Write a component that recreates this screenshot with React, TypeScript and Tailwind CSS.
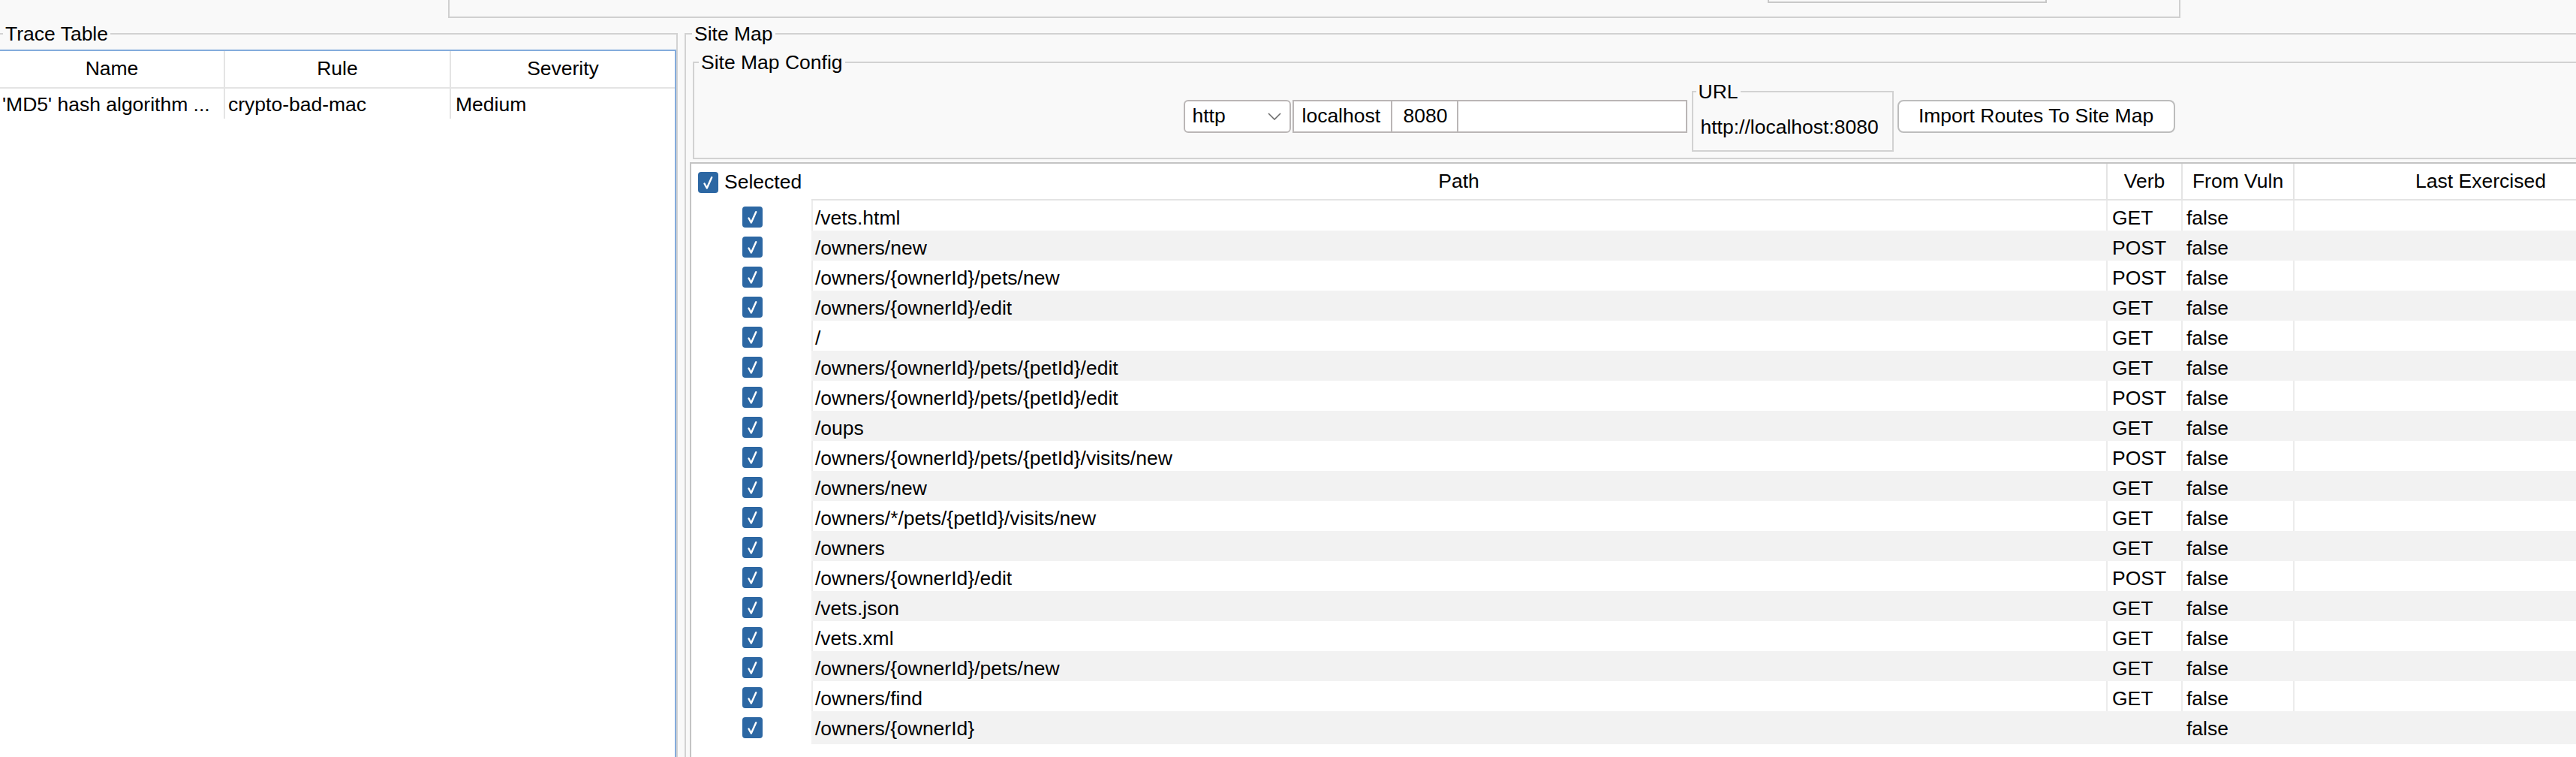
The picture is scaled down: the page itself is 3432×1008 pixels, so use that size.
import React from "react";

type Route = { path: string; verb: string; vuln: string };

const routes: Route[] = [
  { path: "/vets.html", verb: "GET", vuln: "false" },
  { path: "/owners/new", verb: "POST", vuln: "false" },
  { path: "/owners/{ownerId}/pets/new", verb: "POST", vuln: "false" },
  { path: "/owners/{ownerId}/edit", verb: "GET", vuln: "false" },
  { path: "/", verb: "GET", vuln: "false" },
  { path: "/owners/{ownerId}/pets/{petId}/edit", verb: "GET", vuln: "false" },
  { path: "/owners/{ownerId}/pets/{petId}/edit", verb: "POST", vuln: "false" },
  { path: "/oups", verb: "GET", vuln: "false" },
  { path: "/owners/{ownerId}/pets/{petId}/visits/new", verb: "POST", vuln: "false" },
  { path: "/owners/new", verb: "GET", vuln: "false" },
  { path: "/owners/*/pets/{petId}/visits/new", verb: "GET", vuln: "false" },
  { path: "/owners", verb: "GET", vuln: "false" },
  { path: "/owners/{ownerId}/edit", verb: "POST", vuln: "false" },
  { path: "/vets.json", verb: "GET", vuln: "false" },
  { path: "/vets.xml", verb: "GET", vuln: "false" },
  { path: "/owners/{ownerId}/pets/new", verb: "GET", vuln: "false" },
  { path: "/owners/find", verb: "GET", vuln: "false" },
  { path: "/owners/{ownerId}", verb: "", vuln: "false" },
];

function Check() {
  return (
    <svg viewBox="0 0 27 28" className="w-[27px] h-[28px] shrink-0">
      <rect x="0" y="0" width="27" height="28" rx="4" fill="#2c67a3" />
      <path
        d="M8.5 15.5 L11.8 21.5 L18.2 7.2"
        fill="none"
        stroke="#ffffff"
        strokeWidth="2.4"
        strokeLinecap="round"
        strokeLinejoin="round" />
    </svg>
  );
}

function TraceTable() {
  return (
    <fieldset className="w-[910px] -ml-[2px] mt-[6px] h-[1000px] border-2 border-[#d2d2d2]">
      <legend className="ml-[4px] px-[3px] leading-[30px]">Trace Table</legend>
      {}
      <div className="-ml-[2px] mt-[6px] w-[903px] h-[960px] bg-white border-2 border-[#84acdc]">
        <div className="flex h-[50px] border-b-2 border-[#e4e4e4]">
          <div className="w-[300px] flex items-center justify-center border-r-2 border-[#e4e4e4]">Name</div>
          <div className="w-[301px] flex items-center justify-center border-r-2 border-[#e4e4e4]">Rule</div>
          <div className="w-[298px] flex items-center justify-center">Severity</div>
        </div>
        <div className="flex h-[40px]">
          <div className="w-[300px] flex items-center pl-[3px] pt-[4px] border-r-2 border-[#e4e4e4] whitespace-nowrap overflow-hidden">'MD5' hash algorithm ...</div>
          <div className="w-[301px] flex items-center pl-[4px] pt-[4px] border-r-2 border-[#e4e4e4]">crypto-bad-mac</div>
          <div className="w-[298px] flex items-center pl-[6px] pt-[4px]">Medium</div>
        </div>
      </div>
    </fieldset>
  );
}

function ConfigBar() {
  return (
    <fieldset className="mx-[9px] mt-[8px] border-2 border-[#d2d2d2]">
      <legend className="ml-[6px] px-[3px] leading-[30px]">Site Map Config</legend>
      <div className="flex items-center justify-center pt-[9px] pb-[8px]">
        {}
        <div className="w-[143px] h-[44px] flex items-center justify-between pl-[10px] pr-[11px] bg-white border-2 border-[#bab6b6] rounded-[6px]">
          <span>http</span>
          <svg viewBox="0 0 18 10" className="w-[18px] h-[10px]">
            <path d="M1 1 L9 9 L17 1" fill="none" stroke="#6b6b6b" strokeWidth="1.6" />
          </svg>
        </div>
        <div className="ml-[2px] flex">
          <div className="w-[131px] h-[44px] flex items-center pl-[11px] bg-white border-y-2 border-l-2 border-[#bab6b6]">localhost</div>
          <div className="w-[88px] h-[44px] flex items-center pl-[15px] bg-white border-y-2 border-l-2 border-[#bab6b6]">8080</div>
          <div className="w-[307px] h-[44px] bg-white border-2 border-[#bab6b6]" />
        </div>
        <fieldset className="ml-[6px] w-[269px] border-2 border-[#d2d2d2]">
          <legend className="ml-[4px] px-[3px] leading-[30px]">URL</legend>
          <div className="pl-[10px] pt-[17px] pb-[16px] leading-[30px] whitespace-nowrap">http://localhost:8080</div>
        </fieldset>
        <button className="ml-[5px] w-[370px] h-[44px] flex items-center justify-center bg-white border-2 border-[#bdbdbd] rounded-[8px] whitespace-nowrap">
          Import Routes To Site Map
        </button>
      </div>
    </fieldset>
  );
}

function RouteRow({ route, index }: { route: Route; index: number }) {
  const odd = index % 2 === 1;
  const cell = odd
    ? "flex items-center pt-[4px] bg-[#f2f2f2] border-l-2 border-[#f2f2f2] whitespace-nowrap"
    : "flex items-center pt-[4px] bg-white border-l-2 border-[#ececec] whitespace-nowrap";
  return (
    <div className="grid grid-cols-[160px_1725px_100px_149px_498px] h-[40px]">
      <div className="flex items-center justify-center pl-[2px] bg-white">
        <Check />
      </div>
      <div className={`${cell} pl-[3px]`}>{route.path}</div>
      <div className={`${cell} pl-[6px]`}>{route.verb}</div>
      <div className={`${cell} pl-[5px]`}>{route.vuln}</div>
      <div className={cell} />
    </div>
  );
}

function SiteMap() {
  return (
    <fieldset className="w-[2649px] shrink-0 mt-[6px] h-[1000px] border-2 border-[#d2d2d2]">
      <legend className="ml-[8px] px-[3px] leading-[30px]">Site Map</legend>
      <ConfigBar />
      {}
      <div className="mx-[5px] mt-[4px] h-[900px] bg-white border-2 border-[#c4c4c4]">
        <div className="grid grid-cols-[160px_1725px_100px_149px_498px] h-[49px]">
          <div className="flex items-center pl-[9px] gap-[8px]">
            <Check />
            <span>Selected</span>
          </div>
          <div className="flex items-center justify-center border-b-2 border-[#e4e4e4]">Path</div>
          <div className="flex items-center justify-center border-b-2 border-l-2 border-[#e4e4e4]">Verb</div>
          <div className="flex items-center justify-center border-b-2 border-l-2 border-[#e4e4e4]">From Vuln</div>
          <div className="flex items-center justify-center border-b-2 border-l-2 border-[#e4e4e4]">Last Exercised</div>
        </div>
        {routes.map((r, i) =>
        <RouteRow key={i} route={r} index={i} />
        )}
      </div>
    </fieldset>
  );
}

export default function App() {
  return (
    <div className="w-[3432px] h-[1008px] overflow-hidden bg-[#f9f9f9] text-black text-[26.5px] font-['Liberation_Sans',Arial,sans-serif]">
      {}
      <div className="h-[24px] flex">
        <div className="ml-[597px] w-[2308px] h-full border-x-2 border-b-2 border-[#d0d0d0]">
          <div className="ml-[1756px] w-[372px] h-[4px] border-x-2 border-b-2 border-[#c8c8c8]" />
        </div>
      </div>
      <div className="flex gap-[9px] items-start">
        <TraceTable />
        <SiteMap />
      </div>
    </div>
  );
}
